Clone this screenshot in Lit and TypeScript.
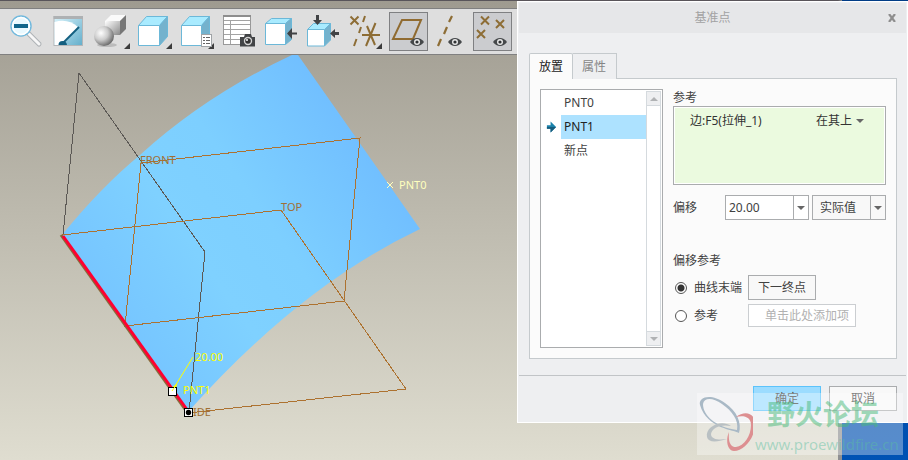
import { LitElement, html, css, svg } from "lit";
import { customElement, state } from "lit/decorators.js";
import { classMap } from "lit/directives/class-map.js";

const corner = svg`<path d="M35 31V37H29Z" fill="#3c3c3c"/>`;

const eye = (x: number, y: number) => svg`
  <g transform="translate(${x} ${y})">
    <path d="M-7 0Q-4 -4 0 -4T7 0Q4 4 0 4T-7 0Z" fill="#45484a"/>
    <circle r="3" fill="#e8e8e8"/><circle r="1.6" fill="#2f3234"/>
  </g>`;

const cross = (x: number, y: number) => svg`
  <path d="M${x - 4} ${y - 4}L${x + 4} ${y + 4}M${x + 4} ${y - 4}L${x - 4} ${y + 4}"
    stroke="#8d6d35" stroke-width="2"/>`;

const cube = (x: number, y: number, w: number, h: number, dx: number, dy: number) => svg`
  <g stroke="#6cb8d8" stroke-width="1" stroke-linejoin="round">
    <path d="M${x} ${y}L${x + dx} ${y - dy}H${x + w + dx}L${x + w} ${y}Z" fill="#a9ebff"/>
    <path d="M${x + w} ${y}L${x + w + dx} ${y - dy}V${y + h - dy}L${x + w} ${y + h}Z" fill="#74b2cd"/>
    <rect x=${x} y=${y} width=${w} height=${h} fill="#fff"/>
  </g>`;

const tools = [
  {
    name: "缩小",
    art: svg`
      <path d="M18 22L28 32" stroke="#aeb2b5" stroke-width="5" stroke-linecap="round"/>
      <path d="M18 22L28 32" stroke="#f7f7f7" stroke-width="3" stroke-linecap="round"/>
      <circle cx="10" cy="14" r="10" fill="#e9f9ff" stroke="#72b9dd" stroke-width="1.5"/>
      <circle cx="10" cy="14" r="8.5" fill="none" stroke="#fff" stroke-width="1.5"/>
      <rect x="3" y="12" width="14" height="4" fill="#12668b"/>`,
  },
  {
    name: "重画",
    art: svg`
      <rect x="1" y="4.500" width="28.500" height="29" fill="url(#sky)" stroke="#b4b6b8"/>
      <path d="M1.500 10Q15 6 25 15L10 33H1.500Z" fill="#fff"/>
      <rect x=".5" y="4" width="29.500" height="3" fill="#aeb1b3"/>
      <path d="M9 32L26 15" stroke="#135f80" stroke-width="2"/>
      <path d="M5.500 33Q5.500 29 9.500 29T14 33Z" fill="#135f80"/>`,
  },
  {
    name: "渲染",
    art: svg`
      <path d="M10 9L16 3H31L25 9Z" fill="#fafafa"/>
      <path d="M25 9L31 3V17L25 23Z" fill="#777"/>
      <rect x="10" y="9" width="15" height="14" fill="url(#metal)"/>
      <ellipse cx="12" cy="33" rx="10" ry="2" fill="#bbb"/>
      <circle cx="9" cy="24" r="10" fill="url(#ball)"/>${corner}`,
  },
  { name: "显示样式", art: svg`${cube(1.5, 13.5, 21, 20, 8, 9)}${corner}` },
  {
    name: "视图列表",
    art: svg`${cube(2.5, 13.5, 20, 20, 8, 9)}
      ${corner}
      <rect x="22.500" y="22.500" width="10" height="12" fill="#fff" stroke="#9fa3a6"/>
      <path d="M27 25.500H31M27 28.500H31M27 31.500H31M24 25.500H26M24 28.500H26M24 31.500H26" stroke="#666"/>`,
  },
  {
    name: "视图管理器",
    art: svg`
      <rect x="2.500" y="3.500" width="27" height="29" fill="#fff" stroke="#999"/>
      <rect x="2" y="3" width="28" height="2" fill="#8d8d8d"/>
      <path d="M3 8.500H29M3 12.500H29M3 17.500H29M3 22.500H29M3 27.500H29M9.500 8V32" stroke="#a3a3a3"/>
      <path d="M19 25H23L24 22H30L31 25H34V34.500H19Z" fill="#424446"/>
      <circle cx="27" cy="29" r="4.200" fill="#d5d5d5"/><circle cx="27" cy="29" r="2.800" fill="#333"/>
      <circle cx="26" cy="28" r="1" fill="#fff"/>`,
  },
  {
    name: "插入",
    art: svg`${cube(2.5, 11.5, 20, 21, 6, 5)}
      <path d="M24 21.500L29 16V20.500H34V22.500H29V27Z" fill="#414345"/>`,
  },
  {
    name: "装配",
    art: svg`${cube(2.500, 17.500, 17, 16.500, 6, 6)}
      <path d="M12.500 13L8 8H11V3H14V8H17Z" fill="#414345"/>
      <path d="M25 21.500L30 17V20H34V23H30V26Z" fill="#414345"/>`,
  },
  {
    name: "基准显示",
    art: svg`${cross(7.5, 8.5)}
      <path d="M18 4L16 10M14 15L12 21M9.500 27L7 34" stroke="#8d6d35" stroke-width="2"/>
      <path d="M15 23H33M28.500 11L19 34M20 14L28 33" stroke="#8d6d35" stroke-width="2"/>${corner}`,
  },
  {
    name: "平面显示",
    toggle: true,
    art: svg`
      <path d="M13 8H32L24 27H4Z" fill="none" stroke="#906b31" stroke-width="2"/>${eye(28, 30)}`,
  },
  {
    name: "轴显示",
    art: svg`
      <path d="M21 4L18 10M16 15L13 22M10 27L7 34" stroke="#8d6d35" stroke-width="2.200"/>${eye(24, 30)}`,
  },
  {
    name: "点显示",
    toggle: true,
    art: svg`${cross(12, 8.5)}${cross(27, 12)}${cross(8, 22)}${eye(27, 30)}`,
  },
];

@customElement("tool-bar")
class ToolBar extends LitElement {
  static styles = css`
    :host {
      display: flex;
      gap: 3px;
      padding: 3px 11px;
      background: #dedede;
      border-top: 1px solid #808080;
      border-bottom: 1px solid #808080;
    }
    .tool {
      flex: none;
      width: 39px;
      height: 39px;
      padding: 0;
      border: 0;
      background: none;
    }
    .pressed {
      background: #cbcccf;
      outline: 1px solid #7f8082;
      outline-offset: -1px;
    }
    .art {
      display: block;
      width: 39px;
      height: 39px;
    }
  `;

  render() {
    return tools.map(
      (t) => html`<button
        class=${classMap({ tool: true, pressed: !!t.toggle })}
        aria-label=${t.name}
      >
        <svg class="art" viewBox="0 0 39 39" fill="none" overflow="visible">
          <defs>
            <linearGradient id="sky" x2="1" y2="1">
              <stop offset="0" stop-color="#d9f3fb" />
              <stop offset="1" stop-color="#63aecb" />
            </linearGradient>
            <linearGradient id="metal" x2="1" y2="1">
              <stop offset="0" stop-color="#fff" />
              <stop offset="1" stop-color="#888" />
            </linearGradient>
            <radialGradient id="ball" cx=".35" cy=".35" r=".7">
              <stop offset="0" stop-color="#fff" />
              <stop offset=".5" stop-color="#ccc" />
              <stop offset="1" stop-color="#666" />
            </radialGradient>
          </defs>
          ${t.art}
        </svg>
      </button>`
    );
  }
}

@customElement("model-view")
class ModelView extends LitElement {
  static styles = css`
    :host {
      display: block;
    }
    .scene {
      display: block;
      width: 517px;
      height: 405px;
      font: 11px "Noto Sans", sans-serif;
    }
    .plane {
      fill: none;
      stroke: #ad7230;
      shape-rendering: crispEdges;
    }
    .side {
      fill: none;
      stroke: #5c5955;
      shape-rendering: crispEdges;
    }
    .tag {
      fill: #a06f35;
    }
    .point {
      fill: #ffffbe;
    }
    .active {
      fill: #ffff00;
    }
  `;

  render() {
    return html`<svg class="scene" viewBox="0 55 517 405">
      <defs>
        <linearGradient id="face" gradientUnits="userSpaceOnUse" x1="115" y1="323" x2="367" y2="148">
          <stop offset="0" stop-color="#76c5ff" />
          <stop offset=".35" stop-color="#7fd1ff" />
          <stop offset=".6" stop-color="#7dcfff" />
          <stop offset="1" stop-color="#71bfff" />
        </linearGradient>
      </defs>
      <path
        d="M62 235Q101 187 140 155Q206 95 292 55H298L420 229Q300 286 188 412Z"
        fill="url(#face)"
      />
      <path class="side" d="M63 235L79 73L205 252L189 412" />
      <path class="plane" d="M141 163L360 138L344 301L125 326Z" />
      <path class="plane" d="M62 235L281 210L406 389L188 413" />
      <path d="M61 235L187 412" stroke="#8a6a3a" stroke-width="3" />
      <path d="M63 236L188 411" stroke="#ff0030" stroke-width="3" />
      <text class="tag" x="140" y="164">FRONT</text>
      <text class="tag" x="281" y="211">TOP</text>
      <text class="tag" x="193" y="416">IDE</text>
      <path d="M387 182L393 188M393 182L387 188" stroke="#ffffbe" />
      <text class="point" x="399" y="189">PNT0</text>
      <path d="M172 391L193 357M173 387L176 385V389" stroke="#ffff00" fill="none" />
      <text class="active" x="195" y="361">20.00</text>
      <rect x="168.500" y="387.500" width="8" height="8" fill="#fff" stroke="#000" />
      <path d="M172 391L177 384" stroke="#ffff00" />
      <text class="active" x="183" y="394">PNT1</text>
      <rect x="184.500" y="408.500" width="8" height="8" fill="#fff" stroke="#000" />
      <circle cx="188.500" cy="412.500" r="2.700" fill="#000" />
    </svg>`;
  }
}

@customElement("datum-dialog")
class DatumDialog extends LitElement {
  @state() selected = 1;
  @state() mode = "end";

  static styles = css`
    :host {
      display: block;
      box-sizing: border-box;
      border: 1px solid #fff;
      background: #eeeff1;
      color: #414141;
      font: 12px/16px "Noto Sans", "Noto Sans CJK SC", sans-serif;
    }
    * {
      box-sizing: border-box;
    }
    button,
    input,
    select {
      margin: 0;
      font: inherit;
      color: inherit;
      border-radius: 0;
    }
    .title {
      display: grid;
      grid-template-columns: 28px 1fr 28px;
      align-items: center;
      height: 30px;
      margin: 1px;
      background: #e6e7e9;
      color: #a2a2a3;
      text-align: center;
    }
    .name {
      grid-column: 2;
      font: inherit;
      margin: 0;
    }
    .close {
      display: grid;
      place-items: center;
      height: 28px;
      padding: 0;
      border: 0;
      background: none;
    }
    .body {
      padding: 19px 10px 0 11px;
    }
    .tabs {
      display: flex;
    }
    .tab {
      height: 26px;
      padding: 0 10px 0 9px;
      border: 1px solid #c5cacd;
      border-left-width: 0;
      border-bottom-width: 0;
      background: #eeeff1;
      color: #858585;
    }
    .tab.current {
      position: relative;
      padding: 0 9px;
      border-left-width: 1px;
      border-radius: 2px 2px 0 0;
      background: #fbfbfb;
      color: #222;
    }
    .panel {
      display: flex;
      gap: 10px;
      margin-top: -1px;
      padding: 10px;
      border: 1px solid #c5cacd;
      background: #fbfbfb;
    }
    .list {
      flex: none;
      display: flex;
      width: 123px;
      min-height: 259px;
      padding: 1px;
      border: 1px solid #aaacae;
      background: #fff;
    }
    .rows {
      flex: 1;
      margin: 0;
      padding: 0;
      list-style: none;
    }
    .row {
      display: grid;
      grid-template-columns: 19px 1fr;
      align-items: center;
    }
    .arrow {
      justify-self: center;
    }
    .item {
      height: 24px;
      padding: 0 3px;
      border: 0;
      background: none;
      text-align: left;
    }
    .item.on {
      background: #ade2ff;
      color: #222;
    }
    .scroll {
      display: flex;
      flex-direction: column;
      justify-content: space-between;
      width: 15px;
      border: 1px solid #d5dade;
    }
    .step {
      display: grid;
      place-items: center;
      height: 14px;
      padding: 0;
      border: 0;
      background: #eeeff1;
      border-bottom: 1px solid #d5dade;
    }
    .step.down {
      border-bottom: 0;
      border-top: 1px solid #d5dade;
    }
    .form {
      flex: 1;
      min-width: 0;
    }
    .label {
      display: block;
      height: 17px;
      line-height: 18px;
    }
    .refs {
      display: flex;
      align-items: flex-start;
      justify-content: space-between;
      height: 79px;
      padding: 6px 21px 6px 16px;
      border: 1px solid #aaacae;
      outline: 1px solid #fff;
      outline-offset: -2px;
      background: #ebfadf;
      color: #333;
    }
    .pick {
      position: relative;
      display: flex;
      align-items: center;
    }
    .pick .caret {
      position: absolute;
      right: 0;
      pointer-events: none;
    }
    .plain {
      appearance: none;
      width: 48px;
      padding: 0;
      border: 0;
      background: none;
    }
    .offset {
      display: grid;
      grid-template-columns: 49px minmax(0, 1fr) 74px;
      column-gap: 3px;
      align-items: center;
      margin-top: 10px;
    }
    .combo {
      display: flex;
      height: 25px;
      border: 1px solid #aaacae;
      background: #fff;
    }
    .value {
      flex: 1;
      min-width: 0;
      padding: 0 3px;
      border: 0;
      background: none;
    }
    .drop {
      display: grid;
      flex: none;
      place-items: center;
      width: 15px;
      padding: 0;
      border: 0;
      border-left: 1px solid #aaacae;
      background: none;
    }
    .kind {
      position: relative;
      display: flex;
      height: 25px;
    }
    .kind .drop {
      position: absolute;
      inset: 1px 1px 1px auto;
      pointer-events: none;
    }
    .unit {
      appearance: none;
      width: 100%;
      padding: 0 7px;
      border: 1px solid #aaacae;
      background: #f8f8f8;
    }
    .group {
      margin: 33px 0 0;
      padding: 0;
      border: 0;
    }
    .legend {
      padding: 0;
      margin-bottom: 6px;
    }
    .choice {
      display: grid;
      grid-template-columns: 75px auto;
      justify-content: start;
      align-items: center;
      margin-bottom: 4px;
    }
    .option {
      display: flex;
      align-items: center;
      gap: 7px;
      padding-left: 2px;
    }
    .radio {
      appearance: none;
      width: 12px;
      height: 12px;
      border: 1px solid #555;
      border-radius: 50%;
      background: #fff;
    }
    .radio:checked {
      background: radial-gradient(circle, #333 3px, #fff 4px);
    }
    .push {
      width: 68px;
      height: 25px;
      padding: 0;
      border: 1px solid #aaacae;
      background: #f8f8f8;
    }
    .collect {
      width: 108px;
      height: 23px;
      padding: 0 6px 0 16px;
      border: 1px solid #cbced1;
      background: #fff;
    }
    .collect::placeholder {
      color: #b1b1b1;
      opacity: 1;
    }
    .footer {
      display: flex;
      justify-content: flex-end;
      gap: 8px;
      margin: 16px 1px 0;
      padding: 10px 9px 11px;
      border-top: 1px solid #c1c4c7;
    }
    .primary {
      border-color: #5cc3fb;
      background: #9cdcff;
    }
  `;

  caret(up = false, tone = "#666") {
    return html`<svg class="caret" width="8" height="4" viewBox="0 0 8 4">
      <path d=${up ? "M0 4L4 0L8 4Z" : "M0 0L4 4L8 0Z"} fill=${tone} />
    </svg>`;
  }

  render() {
    return html`
      <header class="title">
        <h1 class="name">基准点</h1>
        <button class="close" aria-label="关闭">
          <svg width="8" height="8" viewBox="0 0 8 8">
            <path d="M1 0L7 8M7 0L1 8" stroke="#8e8e8e" stroke-width="2.200" />
          </svg>
        </button>
      </header>
      <div class="body">
        <div class="tabs" role="tablist">
          <button class="tab current" role="tab" aria-selected="true">放置</button>
          <button class="tab" role="tab" aria-selected="false">属性</button>
        </div>
        <section class="panel" role="tabpanel">
          <div class="list">
            <ul class="rows">
              ${["PNT0", "PNT1", "新点"].map(
                (p, i) => html`<li class="row">
                  ${i === this.selected
                    ? html`<svg class="arrow" width="11" height="12" viewBox="0 0 12 12">
                        <path d="M1 4H5V0L11 6L5 12V8H1Z" fill="#1b82ab" />
                        <path d="M1 6H11L5 12V8H1Z" fill="#175c7d" />
                      </svg>`
                    : html`<span></span>`}
                  <button
                    class=${classMap({ item: true, on: i === this.selected })}
                    @click=${() => (this.selected = i)}
                  >
                    ${p}
                  </button>
                </li>`
              )}
            </ul>
            <div class="scroll">
              <button class="step" aria-label="向上">${this.caret(true, "#b0b2b4")}</button>
              <button class="step down" aria-label="向下">${this.caret(false, "#b0b2b4")}</button>
            </div>
          </div>
          <div class="form">
            <span class="label">参考</span>
            <div class="refs">
              <span>边:F5(拉伸_1)</span>
              <span class="pick">
                <select class="plain" aria-label="约束">
                  <option>在其上</option>
                </select>
                ${this.caret()}
              </span>
            </div>
            <div class="offset">
              <label for="offset">偏移</label>
              <div class="combo">
                <input class="value" id="offset" value="20.00" />
                <button class="drop" aria-label="最近的值">${this.caret()}</button>
              </div>
              <div class="kind">
                <select class="unit" aria-label="偏移类型">
                  <option>实际值</option>
                </select>
                <span class="drop">${this.caret()}</span>
              </div>
            </div>
            <fieldset class="group">
              <legend class="legend">偏移参考</legend>
              <div class="choice">
                <label class="option">
                  <input
                    class="radio"
                    type="radio"
                    name="from"
                    .checked=${this.mode === "end"}
                    @change=${() => (this.mode = "end")}
                  />曲线末端
                </label>
                <button class="push">下一终点</button>
              </div>
              <div class="choice">
                <label class="option">
                  <input
                    class="radio"
                    type="radio"
                    name="from"
                    .checked=${this.mode === "ref"}
                    @change=${() => (this.mode = "ref")}
                  />参考
                </label>
                <input class="collect" aria-label="参考" placeholder="单击此处添加项" />
              </div>
            </fieldset>
          </div>
        </section>
      </div>
      <footer class="footer">
        <button class="push primary">确定</button>
        <button class="push">取消</button>
      </footer>
    `;
  }
}

@customElement("forum-mark")
class ForumMark extends LitElement {
  static styles = css`
    :host {
      display: flex;
      gap: 2px;
      box-sizing: border-box;
      width: 206px;
      height: 62px;
      background: rgba(255, 255, 255, 0.34);
      pointer-events: none;
    }
    .logo {
      flex: none;
      width: 56px;
      height: 62px;
    }
    .words {
      display: flex;
      flex-direction: column;
      white-space: nowrap;
    }
    .cn {
      padding-left: 12px;
      font: 700 28px/41px "Noto Sans CJK SC", sans-serif;
      color: rgba(70, 185, 120, 0.5);
    }
    .url {
      font: 15px/21px "Noto Sans", sans-serif;
      color: rgba(90, 190, 160, 0.45);
    }
  `;

  render() {
    return html`
      <svg class="logo" viewBox="0 0 56 62" fill="none">
        <path
          fill-rule="evenodd"
          fill="#a9b9c6"
          d="M3 12C1 4 14 0 28 10C40 18 45 30 42 40C38 37 10 36 3 12ZM6 11C6 22 18 34 40 37C42 27 35 18 25 11C15 4 7 5 6 11Z"
        />
        <path
          fill-rule="evenodd"
          fill="#b9c0c3"
          d="M34 33C24 26 8 34 10 44C11 49 18 50 30 46C23 47 14 47 14 41C15 34 25 31 34 33Z"
        />
        <path
          fill-rule="evenodd"
          fill="#dd8f91"
          d="M39 24C48 17 58 20 58 31C58 45 47 58 37 58C31 58 28 48 32 39C31 50 34 54 39 54C47 53 54 43 54 32C54 24 47 22 39 24Z"
        />
      </svg>
      <div class="words">
        <span class="cn">野火论坛</span>
        <span class="url">www.proewildfire.cn</span>
      </div>
    `;
  }
}

@customElement("app-root")
class AppRoot extends LitElement {
  static styles = css`
    :host {
      display: flex;
      position: relative;
      min-height: 100vh;
      overflow: hidden;
    }
    .window {
      flex: 1;
      min-width: 0;
      padding-top: 7px;
      border-top: 1px solid #59555a;
      border-right: 4px solid #8f9092;
      background: linear-gradient(#9f9b90, #dfddd0);
    }
    .desktop {
      flex: none;
      width: 66px;
      background: linear-gradient(#003c86, #0052b4);
    }
    .dialog {
      position: absolute;
      top: 1px;
      right: 0;
      width: 391px;
      max-width: 100%;
    }
    .mark {
      position: absolute;
      right: 5px;
      bottom: 5px;
    }
  `;

  render() {
    return html`
      <main class="window">
        <tool-bar></tool-bar>
        <model-view></model-view>
      </main>
      <div class="desktop"></div>
      <datum-dialog class="dialog"></datum-dialog>
      <forum-mark class="mark"></forum-mark>
    `;
  }
}
